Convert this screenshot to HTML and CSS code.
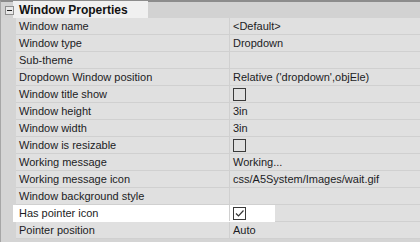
FILE: index.html
```html
<!DOCTYPE html>
<html lang="en">
<head>
    <meta charset="UTF-8">
    <title>Window Properties</title>
    <link rel="stylesheet" href="styles.css">
</head>
<body>
    <div class="grid">
        <div class="cat">
            <span class="toggle"><span class="minus"></span></span>
            <span class="cat-title">Window Properties</span>
        </div>
        <div class="row"><span class="name">Window name</span><span class="value">&lt;Default&gt;</span></div>
        <div class="row"><span class="name">Window type</span><span class="value">Dropdown</span></div>
        <div class="row"><span class="name">Sub-theme</span><span class="value"></span></div>
        <div class="row"><span class="name">Dropdown Window position</span><span class="value">Relative ('dropdown',objEle)</span></div>
        <div class="row"><span class="name">Window title show</span><span class="value"><span class="check"></span></span></div>
        <div class="row"><span class="name">Window height</span><span class="value">3in</span></div>
        <div class="row"><span class="name">Window width</span><span class="value">3in</span></div>
        <div class="row"><span class="name">Window is resizable</span><span class="value"><span class="check"></span></span></div>
        <div class="row"><span class="name">Working message</span><span class="value">Working...</span></div>
        <div class="row"><span class="name">Working message icon</span><span class="value">css/A5System/Images/wait.gif</span></div>
        <div class="row"><span class="name">Window background style</span><span class="value"></span></div>
        <div class="row marked"><span class="name">Has pointer icon</span><span class="value"><span class="check"><svg width="11" height="11" viewBox="0 0 11 11"><path d="M2 5.5 L4.5 8 L9.5 2.5" fill="none" stroke="#333" stroke-width="1.2"/></svg></span></span></div>
        <div class="row"><span class="name">Pointer position</span><span class="value">Auto</span></div>
    </div>
</body>
</html>
```

FILE: styles.css
```css
body { margin: 0; background: #dcdcdc; font-family: "Liberation Sans", Arial, sans-serif; font-size: 11px; color: #1c1c24; }
.grid { width: 420px; height: 242px; border-top: 2px solid #8c8c8c; border-left: 1px solid #a6a6a6; box-sizing: border-box; background: #d4d4d4; }
.cat { position: relative; height: 16px; display: flex; align-items: center; background: #d2d2d2; }
.cat::before { content: ""; position: absolute; left: 12px; top: -1px; width: 135px; height: 17px; background: #f0f0f0; }
.toggle { position: relative; z-index: 1; width: 9px; height: 9px; margin: 1px 0 0 4px; box-sizing: border-box; border: 1px solid #8e8e8e; background: #e8e8e8; display: flex; align-items: center; justify-content: center; }
.minus { width: 5px; height: 1px; background: #222; }
.cat-title { position: relative; z-index: 1; margin-left: 5px; font-weight: bold; font-size: 12px; color: #111; }
.row { position: relative; display: flex; height: 16px; margin-left: 15px; border-bottom: 1px solid #d0d0d0; background: #e0e0e0; line-height: 16px; }
.name { width: 210px; padding-left: 3px; border-right: 1px solid #d0d0d0; }
.value { flex: 1; padding-left: 3px; display: flex; align-items: center; }
.name, .value { position: relative; z-index: 1; white-space: nowrap; }
.check { width: 13px; height: 13px; box-sizing: border-box; border: 1px solid #3a3a3a; display: flex; align-items: center; justify-content: center; margin-top: 1px; }
.marked::before { content: ""; position: absolute; left: -3px; top: 0; width: 262px; height: 17px; background: #fff; }
```
